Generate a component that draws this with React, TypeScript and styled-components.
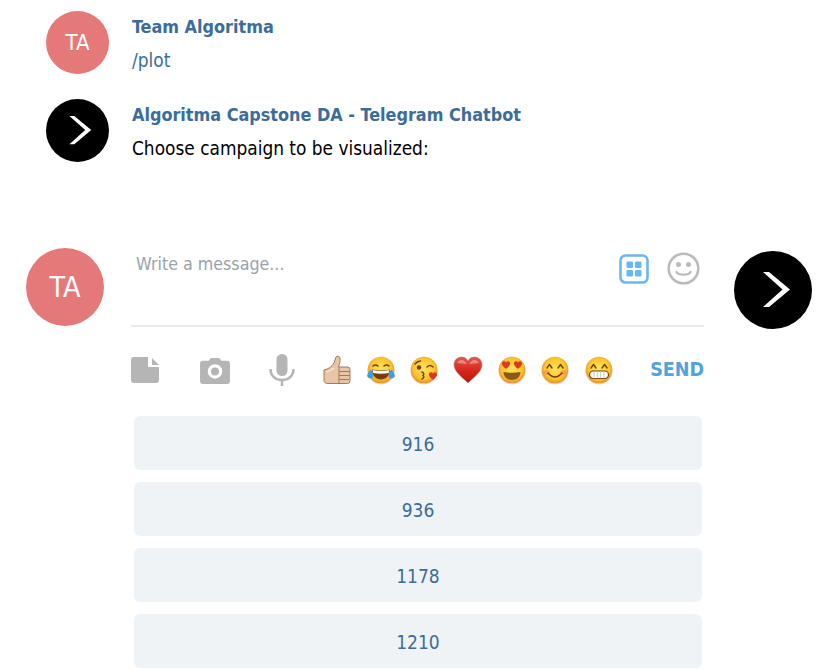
import React from "react";
import styled, { createGlobalStyle } from "styled-components";

const Global = createGlobalStyle`
  html, body { margin: 0; padding: 0; background: #fff; }
  body { font-family: "DejaVu Sans Condensed", "DejaVu Sans", sans-serif; }
`;

const Page = styled.div`
  width: 827px;
  height: 670px;
  overflow: hidden;
  display: flex;
  flex-direction: column;
  padding-top: 11px;
  box-sizing: border-box;
`;

const History = styled.div`
  display: flex;
  flex-direction: column;
  gap: 25px;
  padding-left: 46px;
`;

const Message = styled.div`
  display: flex;
  gap: 23px;
  height: 63px;
`;

const Avatar = styled.div<{ $size: number; $fs: number; $dark?: boolean }>`
  width: ${(p) => p.$size}px;
  height: ${(p) => p.$size}px;
  flex: none;
  border-radius: 50%;
  background: ${(p) => (p.$dark ? "#000" : "#e57979")};
  color: #fff;
  font-size: ${(p) => p.$fs}px;
  display: flex;
  align-items: center;
  justify-content: center;
`;

const MsgBody = styled.div`
  display: flex;
  flex-direction: column;
  gap: 10px;
  padding-top: 5px;
`;

const Author = styled.div`
  font-weight: bold;
  font-size: 17.85px;
  line-height: 22px;
  color: #3a6d99;
`;

const MsgText = styled.div<{ $link?: boolean }>`
  font-size: 18.9px;
  line-height: 24px;
  color: ${(p) => (p.$link ? "#3a6d99" : "#000")};
`;

const ComposerRow = styled.div`
  display: flex;
  align-items: flex-start;
  margin-top: 86px;
  padding-left: 26px;
`;

const Composer = styled.div`
  width: 573px;
  margin-left: 27px;
  flex: none;
`;

const InputArea = styled.div`
  height: 79px;
  box-sizing: border-box;
  border-bottom: 2px solid #e9e9e9;
  display: flex;
  align-items: flex-start;
  justify-content: space-between;
  padding: 4px 4px 0 5px;
`;

const Placeholder = styled.div`
  font-size: 17.7px;
  line-height: 24px;
  color: #9aa2ab;
`;

const InputIcons = styled.div`
  display: flex;
  align-items: center;
  gap: 18px;
`;

const Toolbar = styled.div`
  height: 86px;
  display: flex;
  align-items: center;
`;

const AttachIcons = styled.div`
  display: flex;
  align-items: center;
`;

const IconSlot = styled.div<{ $w: number }>`
  width: ${(p) => p.$w}px;
  display: flex;
  align-items: center;
`;

const Emojis = styled.div`
  display: flex;
  align-items: center;
  gap: 13.67px;
  margin-left: 3px;
  filter: blur(0.4px);
`;

const Send = styled.div`
  margin-left: auto;
  font-size: 19.5px;
  font-weight: bold;
  color: #4ea4e0;
  margin-top: -2px;
`;

const RightAvatar = styled.div`
  margin-left: 30px;
  margin-top: 3px;
`;

const Keyboard = styled.div`
  display: flex;
  flex-direction: column;
  gap: 12px;
  width: 568px;
  margin-left: 134px;
  margin-top: 3px;
`;

const KeyButton = styled.div`
  height: 54px;
  box-sizing: border-box;
  padding-top: 1px;
  flex: none;
  border-radius: 6px;
  background: #eff3f6;
  color: #3a6d99;
  font-size: 19px;
  display: flex;
  align-items: center;
  justify-content: center;
`;

const Chevron = ({ size }: { size: number }) => (
  <svg width={size} height={size} viewBox="0 0 78 78">
    <path d="M29 21H35L56 38.500L35 56H29L48.500 38.500Z" fill="#fff" />
  </svg>
);

const FileIcon = () => (
  <svg width="28" height="26" viewBox="0 0 28 26">
    <path d="M3 0H17V10H28V23a3 3 0 0 1-3 3H3a3 3 0 0 1-3-3V3a3 3 0 0 1 3-3Z" fill="#b5b5b5" />
    <path d="M21 1L28 8H21Z" fill="#b5b5b5" />
  </svg>
);

const CameraIcon = () => (
  <svg width="30" height="27" viewBox="0 0 31 28">
    <path
      fillRule="evenodd"
      d="M3 4H9L11 1H20L22 4H28a3 3 0 0 1 3 3V25a3 3 0 0 1-3 3H3a3 3 0 0 1-3-3V7a3 3 0 0 1 3-3ZM15.500 7.500a7.500 7.500 0 1 0 0 15a7.500 7.500 0 1 0 0-15ZM15.500 10.800a4.200 4.200 0 1 1 0 8.400a4.200 4.200 0 1 1 0-8.400Z"
      fill="#b5b5b5"
    />
  </svg>
);

const MicIcon = () => (
  <svg width="26" height="32" viewBox="0 0 26 32">
    <rect x="7.500" y="0" width="11" height="22" rx="5.500" fill="#b5b5b5" />
    <path d="M1.500 15c0 7 5 11 11.500 11s11.500-4 11.500-11" fill="none" stroke="#b5b5b5" strokeWidth="2.500" />
    <rect x="11.800" y="25" width="2.400" height="7" fill="#b5b5b5" />
  </svg>
);

const GridIcon = () => (
  <svg width="30" height="30" viewBox="0 0 30 30">
    <rect x="1.500" y="1.500" width="27" height="27" rx="5" fill="none" stroke="#6ab7f5" strokeWidth="2.600" />
    <rect x="7.500" y="7.500" width="6.500" height="6.500" rx="1.200" fill="#6ab7f5" />
    <rect x="16" y="7.500" width="6.500" height="6.500" rx="1.200" fill="#6ab7f5" />
    <rect x="7.500" y="16" width="6.500" height="6.500" rx="1.200" fill="#6ab7f5" />
    <rect x="16" y="16" width="6.500" height="6.500" rx="1.200" fill="#6ab7f5" />
  </svg>
);

const SmileIcon = () => (
  <svg width="33" height="33" viewBox="0 0 33 33">
    <circle cx="16.500" cy="16.500" r="14.800" fill="none" stroke="#bbb" strokeWidth="2.600" />
    <circle cx="11.500" cy="12.500" r="2.500" fill="#bbb" />
    <circle cx="21.500" cy="12.500" r="2.500" fill="#bbb" />
    <path d="M9.500 20c2 3.500 12 3.500 14 0" fill="none" stroke="#bbb" strokeWidth="2.400" strokeLinecap="round" />
  </svg>
);

const Grad = ({ id }: { id: string }) => (
  <radialGradient id={id} cx="50%" cy="45%" r="55%">
    <stop offset="0%" stopColor="#ffe25a" />
    <stop offset="70%" stopColor="#fdc62f" />
    <stop offset="100%" stopColor="#ef8f22" />
  </radialGradient>
);

const Face = ({ id, children }: { id: string; children: React.ReactNode }) => (
  <svg width="30" height="30" viewBox="0 0 30 30">
    <defs>
      <Grad id={id} />
    </defs>
    <circle cx="15" cy="15.800" r="13.600" fill="#c9c2b8" opacity="0.6" />
    <circle cx="15" cy="15" r="13.300" fill={`url(#${id})`} />
    {children}
  </svg>
);

const ThumbsUp = () => (
  <svg width="30" height="30" viewBox="0 0 30 30">
    <path
      d="M2 15c4-1 8-3 10-7 1-2 1-4 2-6 1-1.500 3.500-1 4 1 .5 3-.5 6-1.500 9h9a2.500 2.500 0 0 1 2.500 2.500V26a2.500 2.500 0 0 1-2.500 2.500H6c-2.500 0-4-1-4-3Z"
      fill="#e8c5a5"
      stroke="#a07a5c"
      strokeWidth="1"
    />
    <path d="M17 12v16M17 16.500h11M17 20.500h11M17 24.500h10" stroke="#a07a5c" strokeWidth="1" fill="none" />
    <path d="M4 17c3-.5 6-2 8-4" stroke="#fff" strokeWidth="1.200" fill="none" opacity="0.6" />
  </svg>
);

const Heart = () => (
  <svg width="30" height="30" viewBox="0 0 30 30">
    <defs>
      <linearGradient id="hg" x1="0" y1="0" x2="0" y2="1">
        <stop offset="0%" stopColor="#e9574d" />
        <stop offset="55%" stopColor="#d8241a" />
        <stop offset="100%" stopColor="#bd1509" />
      </linearGradient>
    </defs>
    <path
      d="M15 28C9 22 1 17 1 9.500 1 5 4.500 2 8.500 2c3 0 5.300 1.500 6.500 4 1.200-2.500 3.500-4 6.500-4C25.500 2 29 5 29 9.500 29 17 21 22 15 28Z"
      fill="url(#hg)"
      stroke="#8f8f8f"
      strokeWidth="0.600"
    />
    <path d="M4 8c2-4 7-4 10 1-4-.5-7-.5-10-1Zm12 1c3-5 8-5 10-1-3 .5-6 .5-10 1Z" fill="#fff" opacity="0.35" />
  </svg>
);

const BROWN = "#6b4210";

const SmileEyes = () => (
  <>
    <path d="M7 13l2.500-3.500L12 13" fill="none" stroke={BROWN} strokeWidth="1.400" strokeLinecap="round" strokeLinejoin="round" />
    <path d="M18 13l2.500-3.500L23 13" fill="none" stroke={BROWN} strokeWidth="1.400" strokeLinecap="round" strokeLinejoin="round" />
  </>
);

const HeartShape = ({ x, y }: { x: number; y: number }) => (
  <path
    transform={`translate(${x} ${y})`}
    d="M0 1.500C0-1 3-1.500 4 .8 5-1.500 8-1 8 1.500 8 4 5 6 4 7 3 6 0 4 0 1.500Z"
    fill="#e0351f"
  />
);

const App = () => (
  <>
    <Global />
    <Page>
      <History>
        <Message>
          <Avatar $size={63} $fs={22}>TA</Avatar>
          <MsgBody>
            <Author>Team Algoritma</Author>
            <MsgText $link>/plot</MsgText>
          </MsgBody>
        </Message>
        <Message>
          <Avatar $size={63} $fs={22} $dark>
            <Chevron size={63} />
          </Avatar>
          <MsgBody>
            <Author>Algoritma Capstone DA - Telegram Chatbot</Author>
            <MsgText>Choose campaign to be visualized:</MsgText>
          </MsgBody>
        </Message>
      </History>
      <ComposerRow>
        <Avatar $size={78} $fs={28.500}>TA</Avatar>
        <Composer>
          <InputArea>
            <Placeholder>Write a message...</Placeholder>
            <InputIcons>
              <GridIcon />
              <SmileIcon />
            </InputIcons>
          </InputArea>
          <Toolbar>
            <AttachIcons>
              <IconSlot $w={69}><FileIcon /></IconSlot>
              <IconSlot $w={69}><CameraIcon /></IconSlot>
              <IconSlot $w={50}><MicIcon /></IconSlot>
            </AttachIcons>
            <Emojis>
              <ThumbsUp />
              <Face id="f1">
                <path d="M7 11q2.500-2 5 0M18 11q2.500-2 5 0" fill="none" stroke={BROWN} strokeWidth="1.500" strokeLinecap="round" />
                <path d="M6 14.500q9 2 18 0c0 6-4 10-9 10s-9-4-9-10Z" fill="#7a3b12" />
                <path d="M6.500 15q8.500 2 17 0l-.8 3q-7.700 1.500-15.400 0Z" fill="#fff" />
                <path d="M5 14.500c-3 3-5 6-3 8s6 1 5.500-3Z" fill="#3d9de6" />
                <path d="M25 14.500c3 3 5 6 3 8s-6 1-5.500-3Z" fill="#3d9de6" />
              </Face>
              <Face id="f2">
                <path d="M6 9q2.500-3 5.500-3M18 12q3-3 6 0" fill="none" stroke={BROWN} strokeWidth="1.400" strokeLinecap="round" />
                <circle cx="10" cy="12.500" r="2.200" fill={BROWN} />
                <path d="M13 17q3 1.500 1 3.500q2 2-1 3.500" fill="none" stroke={BROWN} strokeWidth="1.500" strokeLinecap="round" />
                <HeartShape x={20} y={18} />
              </Face>
              <Heart />
              <Face id="f3">
                <HeartShape x={5} y={7} />
                <HeartShape x={17} y={7} />
                <path d="M6.500 17q8.500 1.500 17 0c0 5-4 8-8.500 8s-8.500-3-8.500-8Z" fill="#8a5a14" />
              </Face>
              <Face id="f4">
                <SmileEyes />
                <ellipse cx="6.500" cy="17.500" rx="3.500" ry="2.500" fill="#f7805a" opacity="0.5" />
                <ellipse cx="23.500" cy="17.500" rx="3.500" ry="2.500" fill="#f7805a" opacity="0.5" />
                <path d="M8 18q7 8 14 0" fill="none" stroke={BROWN} strokeWidth="1.600" strokeLinecap="round" />
              </Face>
              <Face id="f5">
                <SmileEyes />
                <rect x="5.500" y="16" width="19" height="7.500" rx="3.700" fill="#fff" stroke={BROWN} strokeWidth="1.200" />
                <path d="M10 16v7.500M13.300 16v7.500M16.700 16v7.500M20 16v7.500" stroke="#bbb" strokeWidth="0.800" />
              </Face>
            </Emojis>
            <Send>SEND</Send>
          </Toolbar>
        </Composer>
        <RightAvatar>
          <Avatar $size={78} $fs={26} $dark>
            <Chevron size={78} />
          </Avatar>
        </RightAvatar>
      </ComposerRow>
      <Keyboard>
        <KeyButton>916</KeyButton>
        <KeyButton>936</KeyButton>
        <KeyButton>1178</KeyButton>
        <KeyButton>1210</KeyButton>
      </Keyboard>
    </Page>
  </>
);

export default App;
